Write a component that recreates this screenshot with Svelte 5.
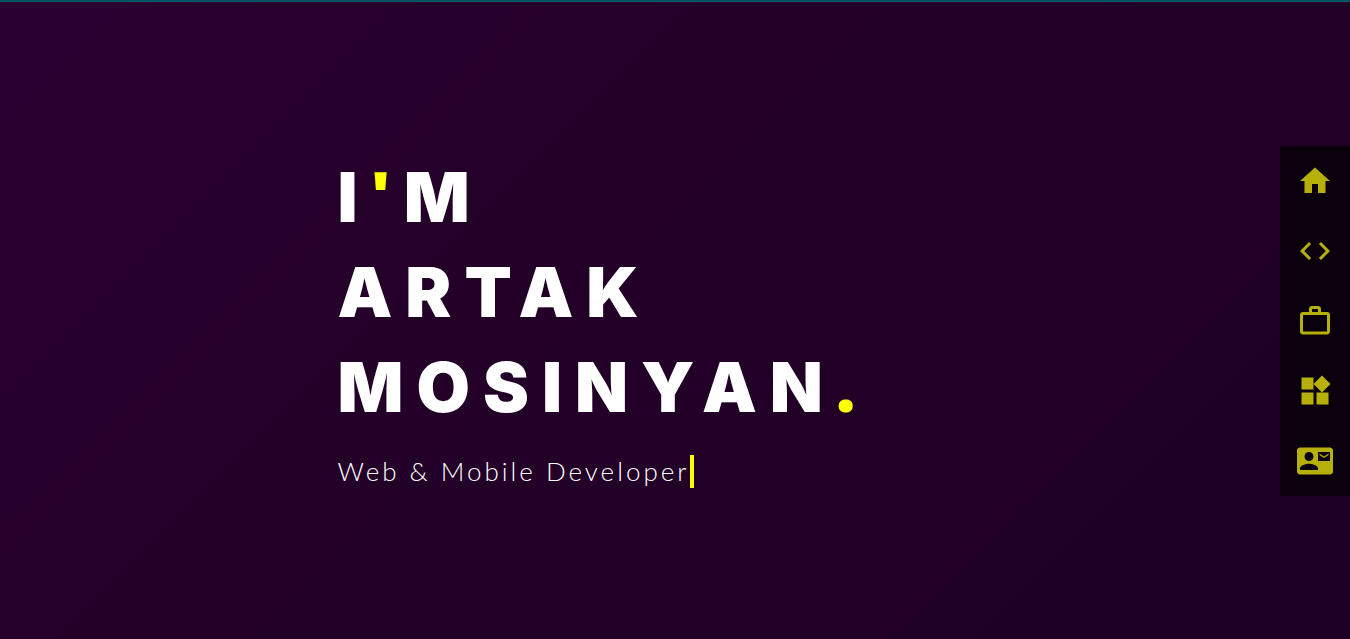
<script>
  const links = [
    { label: 'Home', href: '#home', d: 'M10 20v-6h4v6h5v-8h3L12 3 2 12h3v8z' },
    { label: 'Skills', href: '#skills', d: 'M9.4 16.6 4.8 12l4.6-4.6L8 6l-6 6 6 6 1.4-1.4zm5.2 0 4.6-4.6-4.6-4.6L16 6l6 6-6 6-1.4-1.4z' },
    { label: 'Work', href: '#work', d: 'M14 6V4h-4v2h4zM4 8v11h16V8H4zm16-2c1.110 0 2 .89 2 2v11c0 1.110-.89 2-2 2H4c-1.110 0-2-.89-2-2l.01-11c0-1.110.88-2 1.990-2h4V4c0-1.110.89-2 2-2h4c1.110 0 2 .89 2 2v2h4z' },
    { label: 'Projects', href: '#projects', d: 'M13 13v8h8v-8h-8zM3 21h8v-8H3v8zM3 3v8h8V3H3zm13.660-1.310L11 7.340 16.660 13l5.660-5.660-5.660-5.650z' },
    { label: 'Contact', href: '#contact', d: 'M21 8V7l-3 2-3-2v1l3 2 3-2zm1-5H2C.9 3 0 3.900 0 5v14c0 1.100.9 2 2 2h20c1.100 0 1.990-.9 1.990-2L24 5c0-1.100-.9-2-2-2zM8 6c1.660 0 3 1.340 3 3s-1.340 3-3 3-3-1.340-3-3 1.340-3 3-3zm6 12H2v-1c0-2 4-3.100 6-3.100s6 1.100 6 3.100v1zm8-6h-8V6h8v6z' }
  ];
</script>

<main>
  <section class="intro">
    <h1>
      <span class="line">I<span class="accent">'</span>M</span>
      <span class="line">ARTAK</span>
      <span class="line">MOSINYAN<span class="accent">.</span></span>
    </h1>
    <p>Web &amp; Mobile Developer</p>
  </section>
  <nav aria-label="Sections">
    {#each links as link}
      <a href={link.href} aria-label={link.label}>
        <svg viewBox="0 0 24 24" aria-hidden="true"><path d={link.d} /></svg>
      </a>
    {/each}
  </nav>
</main>

<style>
  :global(body) { margin: 0; background: #24002b; }
  main {
    box-sizing: border-box;
    min-height: 100vh;
    display: flex;
    align-items: center;
    justify-content: space-between;
    border-top: 2px solid #005468;
    background: linear-gradient(135deg, #2a0032, #240029 35%, #200025 75%, #1e0024);
    color: #fff;
  }
  .intro { padding: 0 0 3px 25%; }
  h1 {
    margin: 0;
    font: 900 69px/95px Inter, sans-serif;
    letter-spacing: 13px;
  }
  .line { display: block; }
  .accent { color: #ff0; font-family: "Open Sans", sans-serif; line-height: 1; }
  p {
    width: max-content;
    margin: 20px 0 0;
    border-right: 4px solid #ff0;
    font: 300 26px/33px Lato, sans-serif;
    letter-spacing: 3px;
  }
  nav { display: flex; flex-direction: column; background: #0a000c; }
  a { display: grid; place-items: center; width: 70px; height: 70px; }
  svg { width: 36px; height: 36px; fill: #b8b00a; }
</style>
